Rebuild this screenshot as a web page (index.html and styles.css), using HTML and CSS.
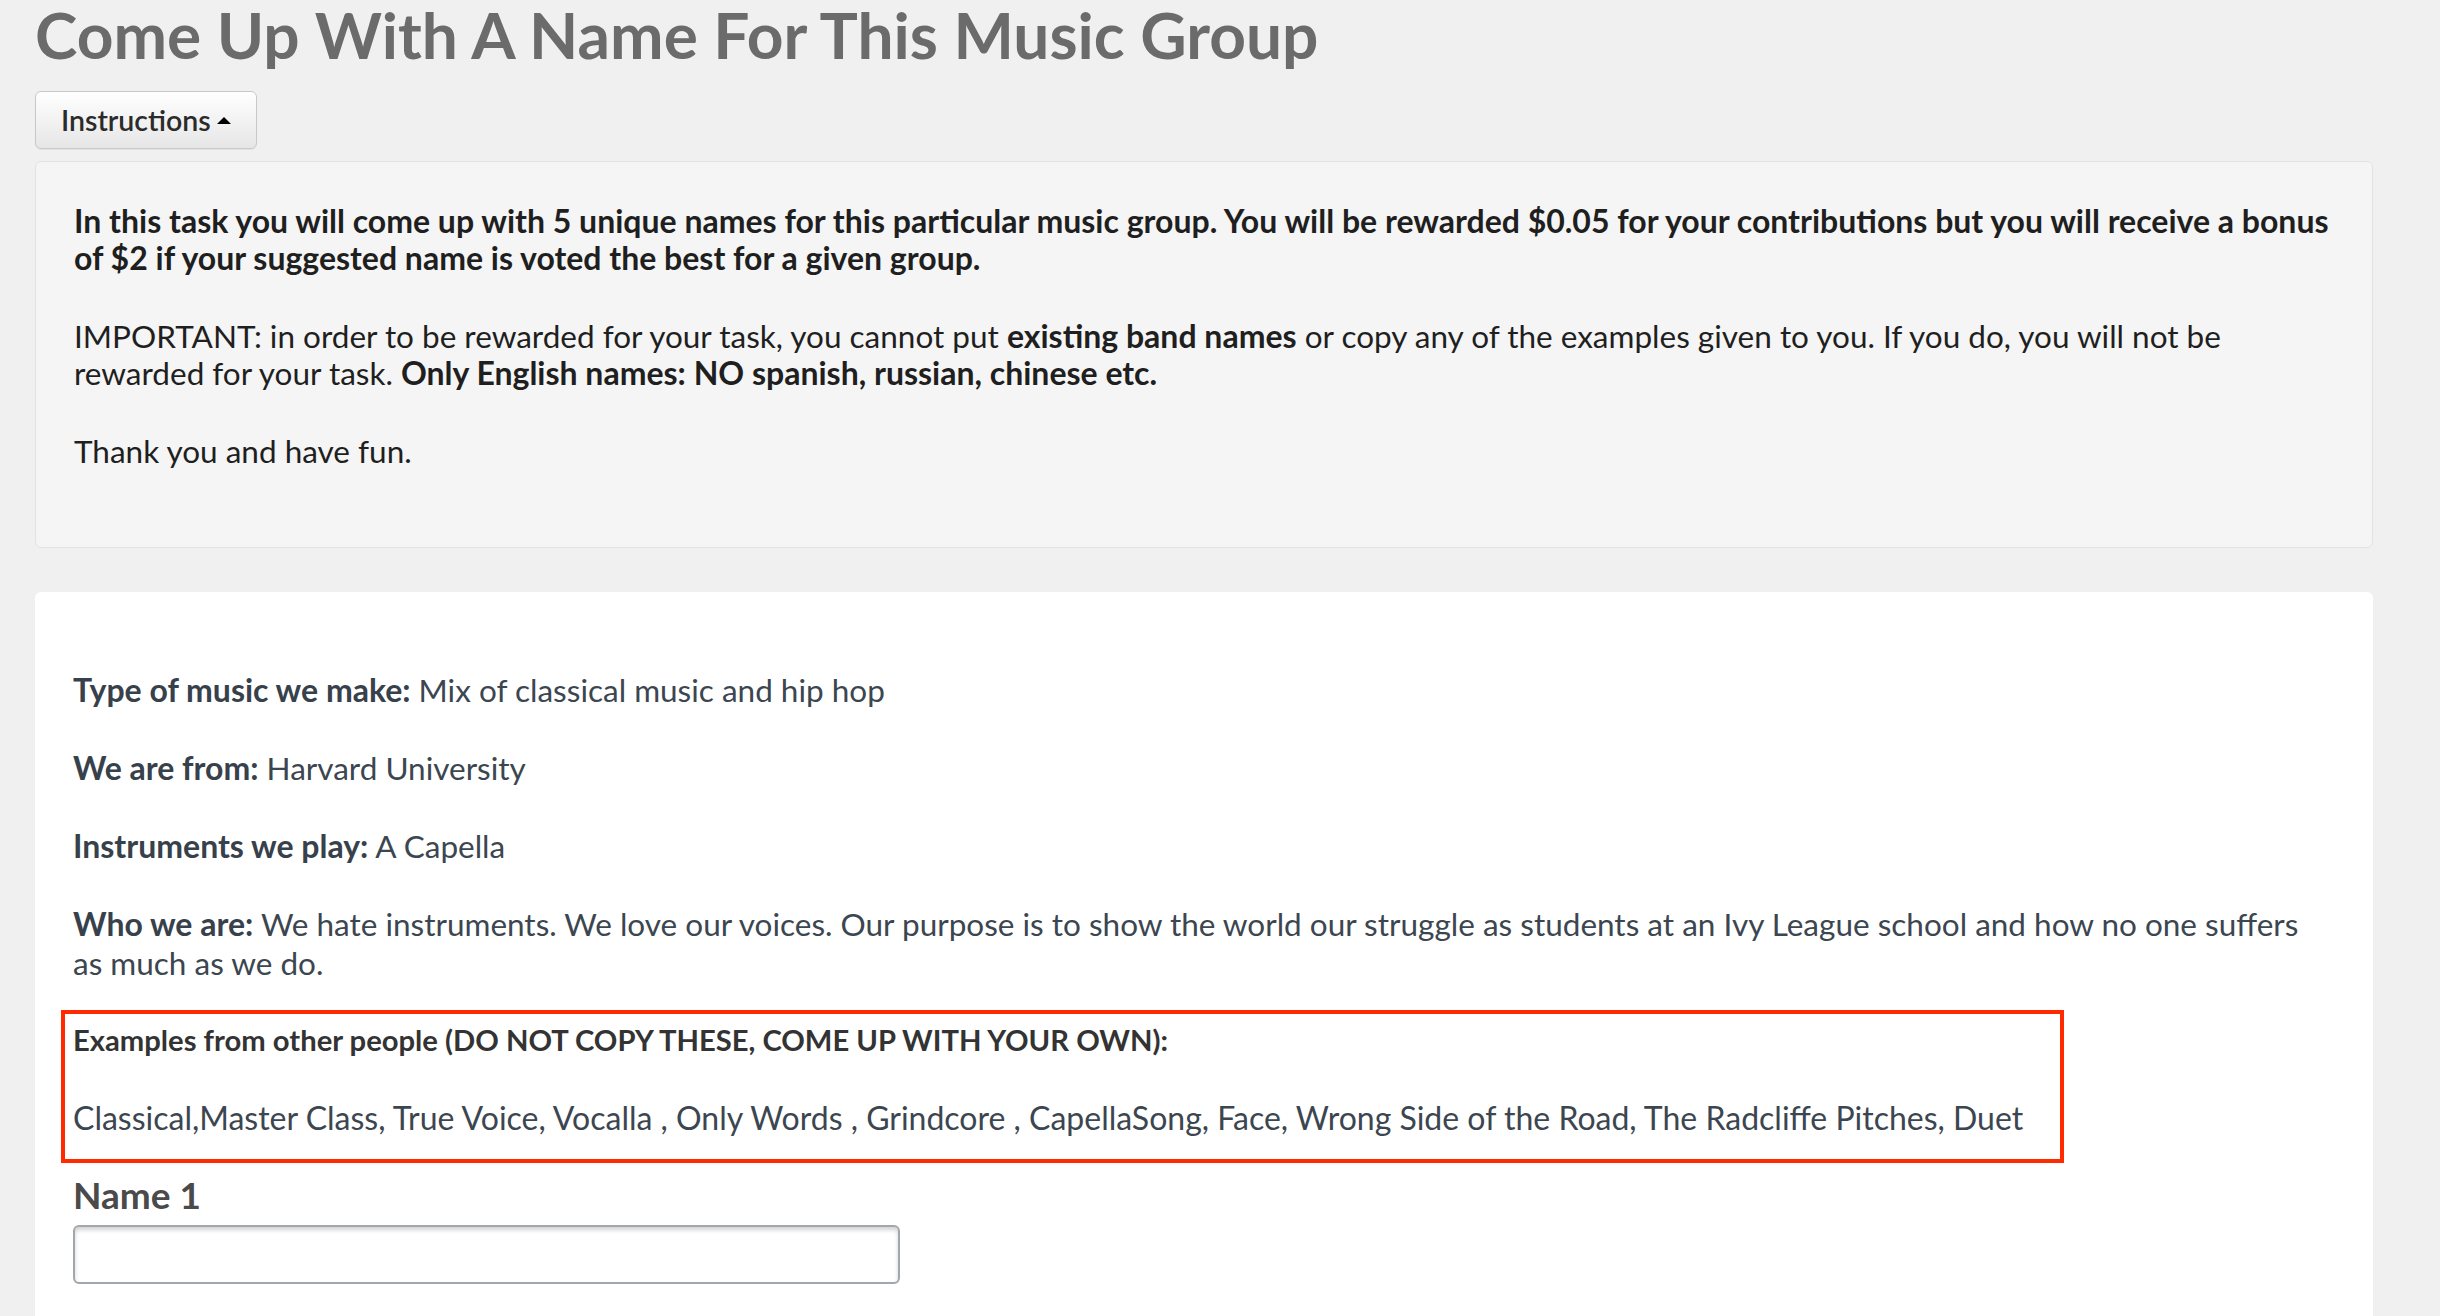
FILE: index.html
```html
<!DOCTYPE html>
<html lang="en">
<head>
<meta charset="utf-8">
<title>Come Up With A Name For This Music Group</title>
<link rel="stylesheet" href="styles.css">
</head>
<body>
<div class="page">
  <h1 class="title">Come Up With A Name For This Music Group</h1>
  <button class="toggle" type="button">Instructions<span class="caret"></span></button>

  <div class="well">
    <p><b>In this task you will come up with 5 unique names for this particular music group. You will be rewarded $0.05 for your contributions but you will receive a bonus of $2 if your suggested name is voted the best for a given group.</b></p>
    <p>IMPORTANT: in order to be rewarded for your task, you cannot put <b>existing band names</b> or copy any of the examples given to you. If you do, you will not be rewarded for your task. <b>Only English names: NO spanish, russian, chinese etc.</b></p>
    <p>Thank you and have fun.</p>
  </div>

  <div class="card">
    <p><b>Type of music we make:</b> Mix of classical music and hip hop</p>
    <p><b>We are from:</b> Harvard University</p>
    <p><b>Instruments we play:</b> A Capella</p>
    <p><b>Who we are:</b> We hate instruments. We love our voices. Our purpose is to show the world our struggle as students at an Ivy League school and how no one suffers as much as we do.</p>
    <div class="examples">
      <p class="examples-head">Examples from other people (DO NOT COPY THESE, COME UP WITH YOUR OWN):</p>
      <p class="examples-list">Classical,Master Class, True Voice, Vocalla , Only Words , Grindcore , CapellaSong, Face, Wrong Side of the Road, The Radcliffe Pitches, Duet</p>
    </div>
    <label class="field-label" for="name1">Name 1</label>
    <input class="field" id="name1" type="text">
  </div>
</div>
</body>
</html>
```

FILE: styles.css
```css
html, body {
  margin: 0;
  padding: 0;
}

body {
  background: #f0f0f0;
  font-family: Lato, "Liberation Sans", sans-serif;
  overflow: hidden;
}

.page {
  padding-left: 35px;
  width: 2338px;
}

.title {
  margin: 0;
  font-size: 64px;
  line-height: 70px;
  font-weight: 700;
  color: #6b6b6b;
  white-space: nowrap;
}

.toggle {
  margin-top: 21px;
  height: 58px;
  display: inline-flex;
  align-items: center;
  padding: 0 8px 0 25px;
  border: 1px solid #c8c8c8;
  border-radius: 6px;
  background: linear-gradient(#ffffff, #e6e6e6);
  box-shadow: 0 1px 1px rgba(0, 0, 0, 0.06);
  font-family: Lato, "Liberation Sans", sans-serif;
  font-size: 28.5px;
  font-weight: 600;
  color: #2b2b2b;
  width: 222px;
  box-sizing: border-box;
  white-space: nowrap;
}

.caret {
  display: inline-block;
  width: 0;
  height: 0;
  margin-left: 6px;
  border-left: 7px solid transparent;
  border-right: 7px solid transparent;
  border-bottom: 7px solid #000;
}

.well {
  margin-top: 12px;
  background: #f5f5f5;
  border: 1px solid #e2e2e2;
  border-radius: 6px;
  padding: 41px 38px 36px;
  font-size: 31.5px;
  line-height: 37px;
  color: #1f1f1f;
}

.well b {
  font-size: 32px;
  line-height: 0;
}

.well p {
  margin: 0 0 41px;
}

.card {
  margin-top: 44px;
  background: #ffffff;
  border-radius: 6px;
  padding: 79px 38px 60px;
  font-size: 31.5px;
  line-height: 39px;
  color: #3c4650;
}

.card p {
  margin: 0 0 39px;
}

.card b {
  font-size: 32px;
  line-height: 0;
  color: #37414b;
}

.examples {
  margin: -12px 0 0 -12px;
  width: 2003px;
  box-sizing: border-box;
  border: 4px solid #ff2a00;
  padding: 6px 8px 22px 8px;
}

.examples .examples-head {
  font-size: 29.2px;
  font-weight: 700;
  color: #333333;
  margin: 0 0 39px;
}

.examples .examples-list {
  font-size: 32px;
  margin: 0;
}

.field-label {
  display: block;
  margin-top: 12px;
  font-size: 37px;
  line-height: 40px;
  font-weight: 700;
  color: #4a4a4a;
  margin-bottom: 10px;
}

.field {
  display: block;
  width: 827px;
  height: 59px;
  box-sizing: border-box;
  border: 2px solid #a2a6ad;
  border-radius: 6px;
  box-shadow: inset 0 3px 4px rgba(0, 0, 0, 0.18);
  background: #fff;
  padding: 0 12px;
  font-family: Lato, "Liberation Sans", sans-serif;
  font-size: 28px;
}
```
